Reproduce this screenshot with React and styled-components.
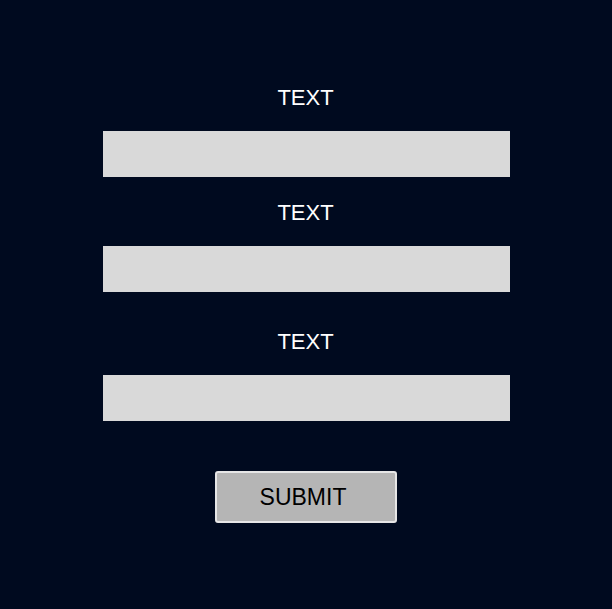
import React from 'react'
import styled, { createGlobalStyle } from 'styled-components'

const GlobalStyle = createGlobalStyle`
    html, body {
        margin: 0;
        padding: 0;
        background-color: #000a1f;
    }
    body {
        font-family: 'Liberation Sans', Arial, sans-serif;
    }
`

const Page = styled.div`
    width: 612px;
    height: 609px;
    background-color: #000a1f;
    display: flex;
    flex-direction: column;
    align-items: center;
    padding-top: 85px;
    box-sizing: border-box;
`

const Field = styled.div`
    display: flex;
    flex-direction: column;
    align-items: center;
    margin-top: ${props => props.$gap || 0}px;
`

const Label = styled.label`
    color: #ffffff;
    font-size: 22px;
    line-height: 26px;
    height: 26px;
    margin-left: -1px;
`

const Input = styled.input`
    width: 407px;
    height: 46px;
    margin-top: 20px;
    margin-left: 1px;
    border: none;
    border-radius: 0;
    background-color: #d9d9d9;
    outline: none;
    padding: 0 10px;
    box-sizing: border-box;
    font-family: inherit;
    font-size: 18px;
`

const SubmitButton = styled.button`
    margin-top: 50px;
    width: 182px;
    height: 52px;
    background-color: #b5b5b5;
    border: 2px solid #e6e6e6;
    border-radius: 3px;
    color: #000000;
    font-family: 'Liberation Sans', Arial, sans-serif;
    font-size: 23px;
    cursor: pointer;
    padding: 0 6px 0 0;
`

const App = () => {
    return (
        <>
            <GlobalStyle />
            <Page>
                <Field>
                    <Label>TEXT</Label>
                    <Input type="text" />
                </Field>
                <Field $gap={23}>
                    <Label>TEXT</Label>
                    <Input type="text" />
                </Field>
                <Field $gap={37}>
                    <Label>TEXT</Label>
                    <Input type="text" />
                </Field>
                <SubmitButton>SUBMIT</SubmitButton>
            </Page>
        </>
    )
}

export default App
